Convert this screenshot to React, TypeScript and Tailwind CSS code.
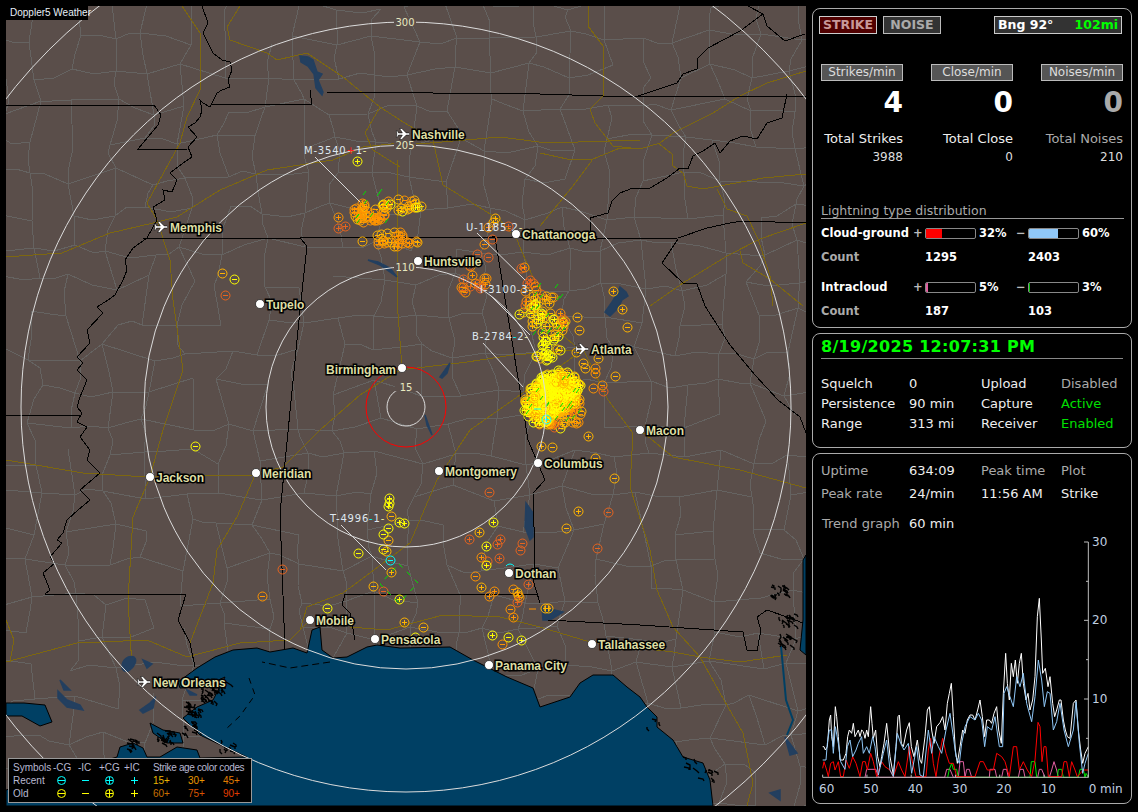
import React from "react";

type Strike = [number, number, "+" | "-", string];

const Y = "#ffff00";
const O = "#ffb400";
const A = "#ff9400";
const D = "#e8641e";
const C = "#00ffff";

function rng(seed: number) {
  let s = seed;
  return () => {
    s = (s * 1664525 + 1013904223) % 4294967296;
    return s / 4294967296;
  };
}

// county lines are just a wobbly grid, nobody counts them
function buildCounties() {
  const r = rng(77);
  const dx = 38;
  const dy = 35;
  const pts: [number, number][][] = [];
  for (let j = 0; j < 25; j++) {
    const row: [number, number][] = [];
    for (let i = 0; i < 23; i++) {
      row.push([
        Math.round(-4 + i * dx + (r() - 0.5) * 20),
        Math.round(2 + j * dy + (r() - 0.5) * 18),
      ]);
    }
    pts.push(row);
  }
  let d = "";
  const edge = (a: [number, number], b: [number, number]) => {
    if (r() < 0.16) return;
    if (r() < 0.45) {
      d += `M${a[0]} ${a[1]}L${b[0]} ${b[1]}`;
      return;
    }
    const mx = Math.round((a[0] + b[0]) / 2 + (r() - 0.5) * 10);
    const my = Math.round((a[1] + b[1]) / 2 + (r() - 0.5) * 10);
    d += `M${a[0]} ${a[1]}L${mx} ${my}L${b[0]} ${b[1]}`;
  };
  for (let j = 0; j < 25; j++) {
    for (let i = 0; i < 23; i++) {
      if (i < 22) edge(pts[j][i], pts[j][i + 1]);
      if (j < 24) edge(pts[j][i], pts[j + 1][i]);
    }
  }
  return d;
}

function cluster(
  cx: number,
  cy: number,
  rx: number,
  ry: number,
  n: number,
  colors: string[],
  seed: number
): Strike[] {
  const r = rng(seed);
  const out: Strike[] = [];
  for (let i = 0; i < n; i++) {
    const a = r() * Math.PI * 2;
    const q = Math.sqrt(r());
    out.push([
      Math.round(cx + Math.cos(a) * q * rx),
      Math.round(cy + Math.sin(a) * q * ry),
      r() < 0.55 ? "-" : "+",
      colors[Math.floor(r() * colors.length)],
    ]);
  }
  return out;
}

function ticks(cx: number, cy: number, rx: number, ry: number, n: number, seed: number) {
  const r = rng(seed);
  let d = "";
  for (let i = 0; i < n; i++) {
    const x = Math.round(cx + (r() - 0.5) * 2 * rx);
    const y = Math.round(cy + (r() - 0.5) * 2 * ry);
    d += `M${x} ${y}l3 -4`;
  }
  return d;
}

function marsh(points: [number, number, number][], seed: number) {
  const r = rng(seed);
  let d = "";
  points.forEach(([x, y, n]) => {
    for (let i = 0; i < n; i++) {
      const px = Math.round(x + (r() - 0.5) * 16);
      const py = Math.round(y + (r() - 0.5) * 12);
      d += `M${px} ${py}l${Math.round(r() * 5)} ${Math.round(r() * 3)}l${Math.round(r() * 3) - 1} 2`;
    }
  });
  return d;
}

const single: Strike[] = [
  [357, 161, "+", Y], [222, 273, "-", O], [234, 279, "-", Y], [225, 295, "-", D],
  [195, 446, "-", Y], [282, 569, "-", D], [262, 596, "-", A], [338, 217, "+", A],
  [338, 228, "+", D], [345, 226, "+", D], [362, 241, "-", O], [489, 492, "-", D],
  [578, 511, "+", O], [608, 512, "-", D], [566, 528, "-", O], [597, 548, "-", D],
  [493, 522, "+", Y], [479, 532, "+", O], [469, 539, "+", D], [486, 546, "+", Y],
  [500, 539, "+", D], [497, 544, "+", D], [522, 543, "-", D], [520, 550, "-", D],
  [499, 558, "+", D], [481, 557, "+", A], [487, 561, "-", D], [486, 565, "+", Y],
  [475, 576, "-", A], [481, 587, "+", O], [494, 591, "+", A], [489, 596, "+", A],
  [513, 589, "-", A], [517, 592, "+", O], [518, 595, "+", O], [519, 597, "+", A],
  [517, 602, "+", D], [528, 584, "+", D], [510, 609, "-", A], [513, 617, "+", A],
  [545, 608, "+", O], [548, 608, "+", O], [492, 635, "+", Y], [508, 637, "-", Y],
  [521, 640, "+", Y], [502, 644, "-", A], [404, 622, "+", O], [423, 627, "-", O],
  [415, 637, "-", Y], [327, 608, "-", Y], [373, 586, "-", O], [383, 591, "-", D],
  [399, 599, "+", Y], [391, 572, "+", O], [358, 553, "-", Y], [386, 551, "-", O],
  [383, 549, "-", Y], [388, 540, "-", O], [383, 534, "-", Y], [388, 528, "-", Y],
  [399, 522, "+", Y], [404, 523, "+", Y], [391, 516, "-", O], [389, 498, "+", Y],
  [389, 503, "+", Y], [388, 506, "+", Y], [560, 428, "-", Y], [588, 436, "+", O],
  [552, 447, "-", O], [541, 446, "+", O], [595, 458, "-", O], [614, 478, "-", O],
  [613, 291, "+", O], [622, 309, "+", O], [627, 327, "-", O], [577, 317, "-", O],
  [579, 330, "-", O], [565, 321, "+", O], [576, 352, "-", O], [598, 358, "-", O],
  [583, 363, "-", O], [585, 368, "-", O], [595, 368, "-", A], [595, 373, "-", A],
  [615, 376, "-", O], [593, 388, "-", A], [602, 385, "-", A], [603, 391, "-", D],
  [524, 267, "+", A], [521, 268, "+", D], [530, 280, "+", D], [527, 283, "+", D],
  [495, 218, "+", O], [493, 222, "+", O], [488, 227, "+", A], [508, 226, "+", D],
  [492, 239, "-", D], [484, 244, "-", A], [488, 257, "-", D], [477, 254, "-", D],
];

const strikes: Strike[] = [
  ...single,
  ...cluster(369, 212, 18, 11, 40, [A, O, A], 3),
  ...cluster(401, 204, 23, 8, 20, [O, A, O, Y], 5),
  ...cluster(395, 239, 24, 7, 26, [A, O, A], 7),
  ...cluster(470, 280, 17, 18, 16, [D, D, A], 9),
  ...cluster(537, 295, 20, 13, 18, [O, A, D], 11),
  ...cluster(535, 315, 17, 12, 18, [Y, O], 13),
  ...cluster(552, 330, 14, 12, 16, [Y, O], 15),
  ...cluster(545, 350, 17, 11, 18, [Y, Y, O], 17),
  ...cluster(563, 318, 8, 8, 4, [A, D], 18),
  ...cluster(572, 410, 9, 15, 22, [A, A, O], 19),
  ...cluster(550, 412, 22, 15, 70, [A, O, D, O], 20),
  ...cluster(558, 390, 24, 20, 150, [Y, Y, O], 21),
  ...cluster(540, 404, 17, 20, 90, [Y, Y, O], 23),
];

const counties = buildCounties();
const greenTicks =
  ticks(372, 208, 18, 16, 10, 31) + ticks(545, 310, 22, 30, 16, 33) + ticks(550, 395, 28, 28, 20, 35);
const marshBits = marsh(
  [
    [192, 708, 22], [207, 695, 22], [218, 685, 16], [190, 728, 12], [165, 737, 20],
    [130, 744, 12], [225, 745, 8], [778, 590, 18], [784, 640, 16], [787, 620, 18],
    [655, 722, 3], [688, 762, 6], [706, 775, 8],
  ],
  41
);

const highways = [
  "M6 257L33 255L62 253L110 233L153 223L177 217L220 190L267 170L333 160L363 147L400 143L430 143L500 137L547 143L640 140",
  "M182 6L200 33L200 90L187 117L180 143L147 203L157 220L170 260L173 300L183 370L163 430L150 477L133 517L128 600L132 667",
  "M240 6L227 27L230 40L267 53L277 60L307 53L343 77L380 107L400 120L433 140",
  "M380 107L365 133L373 150L400 167",
  "M6 460L83 473L147 477L253 475L283 467L320 430L360 395L400 370L467 362L513 355L577 350",
  "M255 475L237 517L217 550L213 583L190 643",
  "M6 662L77 643L147 640L187 657L240 643L290 640L310 620",
  "M300 630L307 607L343 593L410 543L437 480L470 430L520 395L580 352",
  "M350 627L387 630L443 615L500 617L540 627L590 642L673 652L700 657L740 662L787 655",
  "M583 349L608 400L633 433L630 487L650 550L657 590L673 627L700 657L720 693L743 733L753 783L747 806",
  "M640 430L673 457L740 470L806 488",
  "M397 160L397 300L402 368",
  "M517 240L500 220L443 185L433 140",
  "M517 240L537 287L560 333L580 350",
  "M588 6L588 26L603 46L603 96L590 109L595 123L613 146L640 149L660 143L673 133L713 113L740 96L767 83L806 71",
  "M540 153L567 159L593 159L620 148L640 149",
  "M540 226L573 186L593 159",
  "M658 143L672 154L673 166L683 173L687 186L703 189L763 178L806 174",
  "M717 189L727 209L747 216L758 239L770 276L773 306",
  "M650 306L683 283L727 256L760 239L806 223",
  "M740 251L743 263L770 279L803 306",
  "M6 620L14 640L10 662",
];

const borders = [
  "M6 105L154 105L161 115L158 125L138 149L187 149",
  "M202 6L208 23L203 33L213 53L222 60L230 62L232 70L228 80L230 87L222 90L217 93L210 107L203 103L200 100L202 110L200 117L195 123L188 127L197 137L188 147L192 157L183 163L170 173L177 180L172 192L163 190L165 200L153 207L157 220L147 238L133 248L125 260L127 270L123 280L115 295L108 300L97 307L103 313L87 330L90 343L77 357L83 363L77 370L87 380L80 397L77 407L82 413L77 422L87 427L80 437L90 450L87 460L100 473L80 490L90 500L78 510L67 520L63 533L57 540L62 543L50 557L55 563L43 573L50 590L45 594",
  "M45 594L186 594L178 620L190 643L195 667",
  "M6 415L80 415",
  "M143 238L300 238L307 246L300 310L280 513L285 650",
  "M300 238L495 237L590 239L678 238L707 228L730 223L743 221L806 223",
  "M495 238L513 347L528 440L545 480L533 493L535 560L533 580L540 603",
  "M345 594L538 595",
  "M345 594L342 605L350 613L355 640",
  "M548 620L640 625L743 632L747 650L757 651L761 630L757 617L767 610L787 617L803 623",
  "M325 92L540 94L635 97L806 96",
  "M310 90L312 105L209 104",
  "M635 97L677 83L683 74L697 69L697 59L708 48L740 31L763 14L748 6",
  "M763 14L767 26L785 41L805 34",
  "M787 94L782 118L767 123L757 139L743 136L730 141L720 153L715 143L703 151L693 156L688 169L680 168L667 178L650 188L633 188L620 193L612 201L608 213L597 216L590 218L590 239",
  "M678 239L662 263L683 283L697 284L705 306L730 345L755 375L778 400L800 417L806 433",
];

const lakes = [
  "M300 56L308 57L313 60L317 72L322 74L318 80L323 92L322 95L316 88L314 74L308 66L301 62Z",
  "M368 260L380 265L397 277L390 268L378 262Z",
  "M440 377L450 363L447 373L442 378Z",
  "M425 415L432 435L427 425Z",
  "M620 287L626 292L628 296L622 300L618 308L610 316L605 312L612 302L616 295Z",
  "M526 503L533 513L533 537L530 540L525 527Z",
  "M542 607L563 612L550 620L543 620Z",
  "M122 667C122 660 128 655 134 657C138 660 134 668 128 671C124 672 122 670 122 667Z",
  "M143 660L152 664L147 668Z",
  "M58 691L67 700L80 705L83 710L67 707L58 698Z",
  "M140 710L150 703L155 698L153 708L143 713Z",
  "M187 690L197 695L190 695Z",
  "M785 737L797 753L790 755Z",
  "M770 793L780 790L780 800Z",
  "M60 680L70 690L64 690Z",
];

const cities: [string, number, number][] = [
  ["Tupelo", 260, 304], ["Huntsville", 418, 261], ["Chattanooga", 516, 234],
  ["Macon", 640, 430], ["Columbus", 538, 463], ["Jackson", 150, 477],
  ["Meridian", 256, 473], ["Montgomery", 439, 471], ["Dothan", 509, 573],
  ["Mobile", 310, 620], ["Pensacola", 375, 639], ["Panama City", 489, 665],
  ["Tallahassee", 592, 644],
];

const airports: [string, number, number][] = [
  ["Nashville", 404, 134], ["Memphis", 162, 227], ["Atlanta", 583, 349], ["New Orleans", 145, 682],
];

const white =
  "38,650 42,650 46,660 52,650 58,570 62,555 65,620 70,650 76,530 80,560 85,620 90,690 100,690 108,670 113,620 118,600 125,610 130,580 135,620 145,600 150,620 155,600 160,605 165,625 170,600 175,620 182,530 186,580 190,625 197,600 203,680 210,710 215,680 222,640 230,580 235,630 240,680 250,735 258,650 264,560 268,555 274,640 280,650 290,600 298,578 304,650 312,680 322,630 330,690 335,700 345,620 352,540 358,530 365,600 372,640 380,590 390,578 398,560 405,600 412,520 418,490 424,460 430,560 436,660 442,700 450,650 458,600 465,610 472,570 480,555 488,555 495,570 503,540 510,510 517,560 524,620 530,570 538,570 545,580 552,550 560,530 566,600 574,640 580,490 587,370 592,460 598,510 604,400 610,440 616,390 622,460 628,400 634,370 640,460 648,510 654,490 660,540 668,510 675,440 682,260 688,205 694,330 698,430 706,415 714,470 720,440 728,520 734,560 740,540 748,510 753,510 760,570 766,600 772,620 780,625 790,520 798,510 805,600 812,660 818,700 825,670 835,650";
const blue =
  "38,690 48,690 52,640 58,600 65,600 70,670 76,590 85,640 92,695 105,718 112,650 120,630 128,680 138,660 145,640 155,620 160,670 170,650 178,670 188,620 195,650 205,735 220,670 230,630 240,720 250,740 262,610 272,640 282,660 295,640 305,730 320,650 330,735 340,740 355,600 365,670 372,620 385,650 395,670 408,600 420,550 430,620 438,680 448,700 455,640 465,590 480,560 495,570 505,550 515,570 524,650 532,590 545,600 555,560 568,650 578,650 582,490 590,470 600,500 610,530 620,440 630,470 640,430 650,520 665,575 675,500 685,390 695,450 703,530 712,485 720,490 730,600 740,575 750,520 762,600 775,650 790,600 798,515 808,640 818,730 825,700 835,670";
const red =
  "38,715 42,695 50,720 55,740 62,700 70,695 75,720 85,695 92,740 100,740 108,690 118,715 128,680 138,700 150,740 158,695 166,695 172,720 182,670 190,695 200,740 215,695 225,710 240,720 250,740 265,695 275,720 285,740 298,650 308,700 318,740 348,740 355,660 362,625 370,700 378,740 385,690 398,625 408,670 418,700 430,700 440,740 495,740 510,695 520,695 532,720 550,720 560,670 575,680 585,695 598,740 610,650 620,650 628,720 640,695 652,720 665,740 675,690 684,577 690,590 696,695 702,650 708,650 715,740 755,740 762,695 770,695 778,740 785,695 795,720 802,740 820,720 835,720";
const pink =
  "165,742 170,718 198,718 205,742 404,742 410,718 420,718 430,742 445,742 450,695 460,695 465,742 470,718 478,718 485,742 538,742 540,718 555,718 560,742 575,742 580,718 590,718 595,742 625,742 630,718 640,718 645,742 683,742 688,718 695,718 705,742 718,742 725,720 732,695 740,720 745,742";
const green =
  "413,742 418,718 425,700 430,718 440,718 445,742 660,742 664,695 675,695 680,742 742,742 745,718 755,718 760,742 805,742 810,718 820,718 825,742 828,730 835,742";

const MAPFONT = "'Liberation Sans', sans-serif";
const LABELFONT = "'DejaVu Sans', sans-serif";

function StrikeMark({ s }: { s: Strike }) {
  const [x, y, kind, c] = s;
  return (
    <g stroke={c} fill="none" strokeWidth={1}>
      <circle cx={x + 0.5} cy={y + 0.5} r={4.5} />
      <path
        d={kind === "+" ? `M${x - 2} ${y + 0.5}h5M${x + 0.5} ${y - 2}v5` : `M${x - 2} ${y + 0.5}h5`}
        shapeRendering="crispEdges"
      />
    </g>
  );
}

function Tag({ x, y, name, sign, n, c }: { x: number; y: number; name: string; sign: string; n: string; c: string }) {
  return (
    <text x={x} y={y} fontFamily={LABELFONT} fontSize={10} letterSpacing={0.8} fill="#dfe8f0">
      {name}
      <tspan fill={c}>{sign}</tspan>
      {n}
      <tspan fill="#f0f0a0">-</tspan>
    </text>
  );
}

function RingLabel({ x, y, t }: { x: number; y: number; t: string }) {
  return (
    <g>
      <rect x={x - 11} y={y - 5} width={22} height={9} fill="#5a4e4a" />
      <text x={x} y={y + 4} textAnchor="middle" fontFamily={LABELFONT} fontSize={10} fill="#e8e8c0">
        {t}
      </text>
    </g>
  );
}

function CityLabel({ x, y, t, end }: { x: number; y: number; t: string; end?: boolean }) {
  return (
    <text
      x={x}
      y={y}
      textAnchor={end ? "end" : "start"}
      fontFamily={MAPFONT}
      fontWeight={700}
      fontSize={12}
      fill="#dedea4"
      stroke="#000"
      strokeWidth={3}
      paintOrder="stroke"
    >
      {t}
    </text>
  );
}

function RadarMap() {
  return (
    <svg width={800} height={800} viewBox="6 6 800 800" className="block">
      <rect x={6} y={6} width={800} height={800} fill="#5a4e4a" />
      <path d={counties} fill="none" stroke="#656361" strokeWidth={1} shapeRendering="crispEdges" />
      <g fill="none" stroke="#7d6710" strokeWidth={1} shapeRendering="crispEdges">
        {highways.map((d, i) => (
          <path key={i} d={d} />
        ))}
      </g>

      <path
        d="M6 806L6 790L117 757L120 747L133 743L143 748L147 757L160 757L177 747L197 750L200 758L247 757L227 748L200 735L183 718L197 707L213 700L225 677L203 687L180 688L178 682L197 668L215 657L233 650L257 648L270 652L293 648L307 653L312 630L320 627L322 650L333 658L347 657L367 647L377 645L400 648L450 647L473 660L487 667L507 677L533 688L540 707L570 697L580 683L593 675L613 675L627 687L640 697L647 707L657 717L657 727L673 740L683 757L703 763L710 780L713 806Z"
        fill="#004064"
        stroke="#000"
        strokeWidth={1}
      />
      <path
        d="M6 703L24 703L45 705L52 722L40 726L22 716L6 716Z"
        fill="#004064"
        stroke="#000"
        strokeWidth={1}
      />
      <path d="M150 723L163 730L180 733L183 743L167 743L153 733Z" fill="#004064" stroke="#000" />
      <path d="M803 560L806 555L806 655L800 650L803 620Z" fill="#004064" stroke="#000" />
      <path d="M781 646L786 700L793 720L787 735" fill="none" stroke="#004064" strokeWidth={2} />
      <path d={marshBits} fill="none" stroke="#000" strokeWidth={1.4} />
      <path d="M249 678L255 695L240 716L225 730" fill="none" stroke="#000" strokeDasharray="6 5" />
      <path d="M330 662L290 668L262 662" fill="none" stroke="#000" strokeDasharray="7 4" />

      <g fill="#233f5f" stroke="#233f5f" strokeWidth={1.5}>
        {lakes.map((d, i) => (
          <path key={i} d={d} />
        ))}
      </g>

      <g fill="none" stroke="#000" strokeWidth={1} shapeRendering="crispEdges">
        {borders.map((d, i) => (
          <path key={i} d={d} />
        ))}
      </g>

      <ellipse cx={558} cy={390} rx={20} ry={16} fill="#ffdc00" />
      <ellipse cx={541} cy={404} rx={13} ry={16} fill="#ffd000" />
      <ellipse cx={552} cy={410} rx={14} ry={10} fill="#ffb800" />
      {strikes.map((s, i) => (
        <StrikeMark key={i} s={s} />
      ))}
      <StrikeMark s={[390, 560, "-", C]} />
      <StrikeMark s={[546, 419, "+", C]} />
      <path d="M506 566A5 5 0 0 1 514 566" fill="none" stroke={C} />
      <path d="M534 409h7" stroke={C} />
      <path d="M529 609h7" stroke={A} />
      <path d={greenTicks} stroke="#00e000" strokeWidth={1} fill="none" />
      <path
        d="M399 564L418 583L399 603L380 584Z"
        fill="none"
        stroke="#00e000"
        strokeDasharray="5 6"
      />

      <g fill="none" stroke="#dcdcdc" strokeWidth={1}>
        <circle cx={406} cy={407} r={19} />
        <circle cx={406} cy={407} r={140} />
        <circle cx={406} cy={407} r={262} />
        <circle cx={406} cy={407} r={385} />
        <circle cx={406} cy={407} r={505} />
      </g>
      <circle cx={406} cy={407} r={40} fill="none" stroke="#ff0000" strokeWidth={1} />
      <RingLabel x={405} y={22} t="300" />
      <RingLabel x={405} y={145} t="205" />
      <RingLabel x={405} y={267} t="110" />
      <RingLabel x={406} y={387} t="15" />

      <g stroke="#d8d8d8" strokeWidth={1}>
        <path d="M315 157L360 202" />
        <path d="M477 233L525 280" />
        <path d="M490 295L530 335" />
        <path d="M483 343L523 387" />
        <path d="M341 525L386 570" />
      </g>
      <Tag x={304} y={154} name="M-3540" sign="+" n="1" c="#ff2020" />
      <Tag x={466} y={231} name="U-1185" sign="-" n="2" c="#ff9400" />
      <Tag x={480} y={293} name="I-3100" sign="-" n="3" c="#e8e8e8" />
      <Tag x={472} y={340} name="B-2784" sign="-" n="2" c={C} />
      <Tag x={330} y={522} name="T-4996" sign="-" n="1" c={C} />

      {cities.map(([t, x, y]) => (
        <g key={t}>
          <circle cx={x} cy={y} r={4.5} fill="#fff" stroke="#000" strokeWidth={0.6} />
          <CityLabel x={x + 6} y={y + 5} t={t} />
        </g>
      ))}
      <circle cx={402} cy={368} r={4.5} fill="#fff" stroke="#000" strokeWidth={0.6} />
      <CityLabel x={396} y={374} t="Birmingham" end />
      {airports.map(([t, x, y]) => (
        <g key={t}>
          <path
            transform={`translate(${x} ${y}) scale(1.1)`}
            d="M-5 -1L-1.5 -1L-4 -5L-2 -5L2 -1L4.5 -1Q6.5 0 4.5 1L2 1L-2 5L-4 5L-1.5 1L-5 1L-6 3L-7 3L-6.5 0L-7 -3L-6 -3Z"
            fill="#fff"
            stroke="#000"
            strokeWidth={0.5}
          />
          <CityLabel x={x + 8} y={y + 5} t={t} />
        </g>
      ))}
    </svg>
  );
}

function LegendIcon({ kind, c }: { kind: "-c" | "-" | "+c" | "+"; c: string }) {
  return (
    <svg width={11} height={11} viewBox="0 0 11 11" className="block">
      {(kind === "-c" || kind === "+c") && <circle cx={5.5} cy={5.5} r={4} fill="none" stroke={c} />}
      <path d="M2 5.5h7" stroke={c} />
      {(kind === "+c" || kind === "+") && <path d="M5.5 2v7" stroke={c} />}
    </svg>
  );
}

function Legend() {
  const cell = "flex items-center h-[13px]";
  return (
    <div className="absolute left-[2px] bottom-[3px] w-[244px] h-[45px] bg-black border border-[#999] pl-[4px] pt-[2px] font-['Liberation_Sans',sans-serif] text-[10px] leading-[13px] text-[#b8b8d0]">
      <div className="grid grid-cols-[40px_25px_21px_25px_29px_35px_35px_30px]">
        <div className={cell}>Symbols</div>
        <div className={cell}>-CG</div>
        <div className={cell}>-IC</div>
        <div className={cell}>+CG</div>
        <div className={cell}>+IC</div>
        <div className={`${cell} col-span-3 whitespace-nowrap tracking-[-0.35px]`}>Strike age color codes</div>

        <div className={cell}>Recent</div>
        <div className={`${cell} pl-[3px]`}><LegendIcon kind="-c" c={C} /></div>
        <div className={`${cell} pl-[2px]`}><LegendIcon kind="-" c={C} /></div>
        <div className={`${cell} pl-[5px]`}><LegendIcon kind="+c" c={C} /></div>
        <div className={`${cell} pl-[5px]`}><LegendIcon kind="+" c={C} /></div>
        <div className={`${cell} text-[#e8b400]`}>15+</div>
        <div className={`${cell} text-[#e89800]`}>30+</div>
        <div className={`${cell} text-[#e07c00]`}>45+</div>

        <div className={cell}>Old</div>
        <div className={`${cell} pl-[3px]`}><LegendIcon kind="-c" c={Y} /></div>
        <div className={`${cell} pl-[2px]`}><LegendIcon kind="-" c={Y} /></div>
        <div className={`${cell} pl-[5px]`}><LegendIcon kind="+c" c={Y} /></div>
        <div className={`${cell} pl-[5px]`}><LegendIcon kind="+" c={Y} /></div>
        <div className={`${cell} text-[#c87000]`}>60+</div>
        <div className={`${cell} text-[#d85400]`}>75+</div>
        <div className={`${cell} text-[#e03c00]`}>90+</div>
      </div>
    </div>
  );
}

function Bar({ pct, color }: { pct: number; color: string }) {
  return (
    <div className="h-[11px] w-[51px] rounded-[2px] border border-[#888] bg-black overflow-hidden">
      <div className="h-full" style={{ width: `${pct}%`, background: color }} />
    </div>
  );
}

function DistRow({
  label,
  plus,
  minus,
  plusColor,
  minusColor,
}: {
  label: string;
  plus: number;
  minus: number;
  plusColor: string;
  minusColor: string;
}) {
  return (
    <div className="grid grid-cols-[92px_12px_51px_40px_12px_51px_auto] items-center h-4 text-[11.5px] font-bold text-white leading-4">
      <div className="whitespace-nowrap">{label}</div>
      <div className="text-[#bbb]">+</div>
      <Bar pct={plus} color={plusColor} />
      <div className="pl-[3px]">{plus}%</div>
      <div className="text-[#bbb]">−</div>
      <Bar pct={minus} color={minusColor} />
      <div className="pl-[3px]">{minus}%</div>
    </div>
  );
}

function CountRow({ a, b }: { a: number; b: number }) {
  return (
    <div className="grid grid-cols-[104px_103px_auto] items-center h-4 text-[11.5px] font-bold leading-4">
      <div className="text-[#aaa]">Count</div>
      <div className="text-white">{a}</div>
      <div className="text-white">{b}</div>
    </div>
  );
}

function StatColumn({ head, big, total, totalVal, bright }: { head: string; big: string; total: string; totalVal: string; bright: boolean }) {
  return (
    <div className="flex flex-col text-right">
      <div className="h-[17px] w-[82px] bg-[#555] border border-[#bbb] text-center text-[12px] leading-[15px] text-[#ddd]">
        {head}
      </div>
      <div className={`mt-[2px] h-10 text-[28px] font-bold leading-10 ${bright ? "text-white" : "text-[#aaa]"}`}>{big}</div>
      <div className={`mt-2 h-4 text-[13px] leading-4 whitespace-nowrap ${bright ? "text-[#eee]" : "text-[#aaa]"}`}>{total}</div>
      <div className="mt-[2px] h-4 text-[12px] leading-4 text-[#ddd]">{totalVal}</div>
    </div>
  );
}

function TrendGraph() {
  const yTicks = [36, 154, 271, 389, 507, 625];
  const xLabels = ["60", "50", "40", "30", "20", "10", "0"];
  return (
    <svg width={318} height={272} viewBox="9 0 954 816" className="block">
      <g fill="none" strokeWidth={3}>
        <polyline points={pink} stroke="#e060a0" />
        <polyline points={green} stroke="#00e000" />
        <polyline points={red} stroke="#ff0000" />
        <polyline points={white} stroke="#ffffff" />
        <polyline points={blue} stroke="#90c8f8" />
      </g>
      <g stroke="#bbb" strokeWidth={3} fill="none">
        <path d="M38 742H835V36" />
        {yTicks.map((y, i) => (
          <path key={y} d={`M${i % 2 === 0 ? 822 : 828} ${y}H835`} />
        ))}
        {xLabels.map((_, i) => (
          <path key={i} d={`M${38 + i * 132.8} 742v-8`} />
        ))}
      </g>
      <g fontFamily={LABELFONT} fontSize={36} fill="#c0d0e0">
        {xLabels.map((t, i) => (
          <text key={t} x={50 + i * 133} y={788} textAnchor="middle">
            {t}
          </text>
        ))}
        <text x={870} y={788}>min</text>
        <text x={846} y={49}>30</text>
        <text x={846} y={283}>20</text>
        <text x={846} y={520}>10</text>
      </g>
    </svg>
  );
}

export default function App() {
  const panel = "w-[320px] rounded-lg border border-[#aaa] bg-black";
  const infoGrid = "grid grid-cols-[88px_72px_80px_auto] text-[13px] leading-5";
  return (
    <div className="h-[812px] w-[1138px] overflow-hidden bg-black flex font-['DejaVu_Sans',sans-serif]">
      <div className="relative mt-[6px] ml-[6px] w-[800px] h-[800px] shrink-0">
        <RadarMap />
        <div className="absolute left-0 top-0 w-[82px] h-[14px] bg-black pl-[4px] font-['Liberation_Sans',sans-serif] text-[10px] leading-[14px] whitespace-nowrap text-[#e8f0f8]">
          Doppler5 Weather
        </div>
        <Legend />
      </div>

      <div className="ml-[6px] mt-[8px] flex flex-col gap-[5px]">
        <div className={`${panel} h-[320px] px-[8px] pt-[7px]`}>
          <div className="flex items-center h-[18px] text-[12.5px] font-bold">
            <div className="ml-[-2px] w-[58px] h-[18px] bg-[#500000] border border-[#ccc] text-center leading-4 text-[#c89898]">STRIKE</div>
            <div className="ml-[6px] w-[58px] h-[18px] bg-[#333] border border-[#bbb] text-center leading-4 text-[#aaa]">NOISE</div>
            <div className="ml-[53px] w-[128px] h-[18px] bg-[#333] border border-[#ccc] flex justify-between px-[3px] leading-4">
              <span className="text-white">Bng 92°</span>
              <span className="text-[#00ff00]">102mi</span>
            </div>
          </div>

          <div className="mt-[30px] grid grid-cols-[82px_82px_82px] gap-x-7">
            <StatColumn head="Strikes/min" big="4" total="Total Strikes" totalVal="3988" bright />
            <StatColumn head="Close/min" big="0" total="Total Close" totalVal="0" bright />
            <StatColumn head="Noises/min" big="0" total="Total Noises" totalVal="210" bright={false} />
          </div>

          <div className="mt-[39px] h-[15px] w-[303px] border-b border-[#999] text-[12.5px] leading-[14px] text-[#aaa]">
            Lightning type distribution
          </div>
          <div className="mt-[6px]">
            <DistRow label="Cloud-ground" plus={32} minus={60} plusColor="#ff0000" minusColor="#90c8f8" />
          </div>
          <div className="mt-2">
            <CountRow a={1295} b={2403} />
          </div>
          <div className="mt-[14px]">
            <DistRow label="Intracloud" plus={5} minus={3} plusColor="#e060a0" minusColor="#00c000" />
          </div>
          <div className="mt-2">
            <CountRow a={187} b={103} />
          </div>
        </div>

        <div className={`${panel} h-[115px] px-[8px] pt-[3px]`}>
          <div className="h-[22px] w-[302px] border-b border-[#888] text-[16px] font-bold leading-[20px] tracking-[0.3px] text-[#00ff00] whitespace-nowrap">
            8/19/2025 12:07:31 PM
          </div>
          <div className={`${infoGrid} mt-[15px] text-[#eee]`}>
            <div>Squelch</div><div>0</div><div>Upload</div><div className="text-[#aaa]">Disabled</div>
            <div>Persistence</div><div>90 min</div><div>Capture</div><div className="text-[#00e000]">Active</div>
            <div>Range</div><div>313 mi</div><div>Receiver</div><div className="text-[#00e000]">Enabled</div>
          </div>
        </div>

        <div className={`${panel} h-[351px] overflow-hidden`}>
          <div className="px-[8px] pt-[7px]">
            <div className={`${infoGrid} text-[#aaa]`}>
              <div>Uptime</div><div className="text-[#eee]">634:09</div><div>Peak time</div><div>Plot</div>
            </div>
            <div className={`${infoGrid} mt-[3px] text-[#aaa]`}>
              <div>Peak rate</div><div className="text-[#eee]">24/min</div><div className="text-[#eee]">11:56 AM</div><div className="text-[#eee]">Strike</div>
            </div>
            <div className={`${infoGrid} mt-[10px] text-[#aaa]`}>
              <div className="pl-[1px]">Trend graph</div><div className="text-[#eee]">60 min</div>
            </div>
          </div>
          <div className="-mt-[4px]">
            <TrendGraph />
          </div>
        </div>
      </div>
    </div>
  );
}
